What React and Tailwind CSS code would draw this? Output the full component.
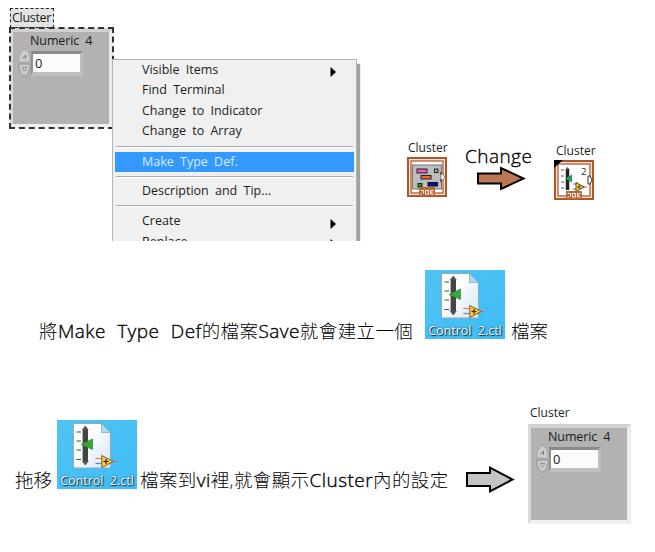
import React from 'react';

function Spinner() {
  return (
    <svg className="-mt-px h-[28px] w-[13px] shrink-0" viewBox="0 0 13 28">
      <path d="M.8 13C.8 6 3.500 1 6.500 1S12.200 6 12.200 13Z" fill="#cdcdcd" stroke="#a2a2a2" strokeWidth=".8" />
      <path d="M.8 15C.8 22 3.500 27 6.500 27S12.200 22 12.200 15Z" fill="#c9c9c9" stroke="#8b8b8b" strokeWidth=".8" />
      <path d="M4.500 9.500 7.500 6v4" fill="none" stroke="#777" />
      <path d="M4.500 18.500h4L6.500 22Z" fill="#eee" stroke="#777" strokeWidth=".8" />
    </svg>
  );
}

function ClusterPanel() {
  return (
    <div className="h-[100px] w-[103px] border-t-4 border-r-4 border-b-4 border-l-[3px] border-t-[#d2d2d2] border-r-[#ececec] border-b-[#f0f0f0] border-l-[#dadada] bg-[#b2b2b2]">
      <div className="ml-[17px] h-[18px] text-[12.5px] leading-[17px] tracking-[-0.1px] whitespace-nowrap [word-spacing:3px]">Numeric 4</div>
      <div className="ml-[5px] flex">
        <Spinner />
        <div className="mt-px h-[25px] w-[52px] border-t-[3px] border-r-[3px] border-b-4 border-l-2 border-t-[#8a8a8a] border-r-[#bfbfbf] border-b-[#c0c0c0] border-l-[#929292] bg-[#fbfbfb] pl-[2px] text-[13px] leading-[18px]">0</div>
      </div>
    </div>
  );
}

function MenuItem({ children, arrow, active }) {
  return (
    <div className={`flex h-[20.4px] shrink-0 items-center pr-[18px] pl-[27px] text-[12.5px] whitespace-nowrap [word-spacing:3px] ${active ? 'bg-[#3399ff] text-[#d9ecff]' : ''}`}>
      <span className="grow leading-none">{children}</span>
      {arrow && (
        <svg className="mt-1 h-[10px] w-[6px]" viewBox="0 0 6 10"><path d="M.5 0 6 5 .5 10Z" fill="#000" /></svg>
      )}
    </div>
  );
}

const Separator = () => <div className="mx-px h-[2px] shrink-0 border-t border-[#a9a9a9] bg-white" />;

function ContextMenu() {
  return (
    <div className="absolute top-[59px] left-[112px] h-[182px] w-[252px] overflow-hidden">
      <div className="flex h-[195px] w-[245px] flex-col border border-[#b4b4b4] bg-[#f0f0f0] px-[2px] shadow-[3px_5px_1px_#a2a2a2]">
        <MenuItem arrow>Visible Items</MenuItem>
        <MenuItem>Find Terminal</MenuItem>
        <MenuItem>Change to Indicator</MenuItem>
        <MenuItem>Change to Array</MenuItem>
        <div className="h-[4px] shrink-0" />
        <Separator />
        <div className="h-[4px] shrink-0" />
        <MenuItem active>Make Type Def.</MenuItem>
        <div className="h-[4px] shrink-0" />
        <Separator />
        <div className="h-[3px] shrink-0" />
        <MenuItem>Description and Tip...</MenuItem>
        <div className="h-[4px] shrink-0" />
        <Separator />
        <div className="h-[4px] shrink-0" />
        <MenuItem arrow>Create</MenuItem>
        <MenuItem arrow>Replace</MenuItem>
      </div>
    </div>
  );
}

function TerminalFrame({ children }) {
  return (
    <svg className="h-[40px] w-[40px]" viewBox="0 0 40 40">
      <rect x="1" y="1" width="38" height="38" fill="#f4e6dc" stroke="#b25427" strokeWidth="2" />
      <rect x="4" y="4" width="32" height="32" fill="#fff" stroke="#c07850" strokeWidth="1.600" />
      {children}
      <rect x="12" y="31" width="16" height="8" fill="#b8673e" />
      <path d="M13.500 33.500h3v3M15 37h-1.500M18.500 37v-3.500h3V37ZM26.500 33.500h-3V37h3M23.500 35.200h2" fill="none" stroke="#fff3e8" strokeWidth="1" />
    </svg>
  );
}

function ClusterTerminal() {
  return (
    <TerminalFrame>
      <rect x="5.500" y="8" width="29" height="24" fill="#bdbdbd" stroke="#777" />
      <rect x="10" y="12" width="10" height="4" fill="#e65cc0" stroke="#222" />
      <rect x="27.500" y="12" width="3.500" height="3.500" fill="#aaa" stroke="#222" />
      <rect x="14" y="18.500" width="10" height="3.500" fill="#ee6430" stroke="#222" />
      <rect x="11" y="26.500" width="4" height="3.500" fill="#179b27" stroke="#222" />
      <rect x="21" y="25.500" width="9.500" height="3.500" fill="#0808b8" stroke="#111" />
      <path d="m34 15 4 5-4 5Z" fill="#fff" stroke="#666" strokeWidth=".8" />
      <path d="M34 15v3M34 22v3" stroke="#222" />
      <rect x="12" y="30" width="16" height="2" fill="#b8673e" />
    </TerminalFrame>
  );
}

function TypeDefTerminal() {
  return (
    <TerminalFrame>
      <path d="M0 0h9L0 8Z" fill="#000" />
      <path d="M13.500 10v20" stroke="#222" strokeWidth="3.500" />
      <path d="m11 10 2.500-3 2.500 3Z" fill="#555" />
      <path d="M7 10h3M7 16h3M7 22h3M7 28h3" stroke="#555" />
      <path d="M11 18.500 18 14.500v8Z" fill="#299b58" />
      <text x="27" y="14.500" fontSize="9.500" fill="#222">2</text>
      <path d="M19 24h5M19 29h5M29 27h4" stroke="#e33a4a" />
      <path d="m22 22.500 8 4.500-8 4.500Z" fill="#ffe51f" stroke="#333" strokeWidth=".9" />
      <path d="M23 27h4M25 25v4" stroke="#222" strokeWidth=".8" />
      <path d="M34 16h2l2 4-2 4h-2Z" fill="#fff" stroke="#333" />
    </TerminalFrame>
  );
}

function Arrow({ brown }) {
  return (
    <svg className="h-[27px] w-[49px]" viewBox="0 0 49 27">
      {brown
        ? <path d="M1 8.500h23V3L46.500 13.500 24 24v-5.500H1Z" fill="#bc7853" stroke="#000" strokeWidth="2" />
        : <path d="M1 7h23V1.700L46.500 13.500 24 25.300V20H1Z" fill="#c4c4c4" stroke="#000" strokeWidth="2" />}
    </svg>
  );
}

function FileIcon() {
  return (
    <div className="flex h-[69px] w-[80px] flex-col items-center overflow-hidden bg-gradient-to-br from-[#51c4f0] to-[#3dbcf9]">
      <svg className="h-[50px] w-[80px] shrink-0" viewBox="0 0 80 50">
        <defs>
          <linearGradient id="paper" x1="0" y1="0" x2="1" y2="1">
            <stop offset=".35" stopColor="#fff" /><stop offset="1" stopColor="#d3e3f4" />
          </linearGradient>
        </defs>
        <path d="M16.500 3.500h28l9 9v35.500h-37Z" fill="url(#paper)" stroke="#90a9bb" />
        <path d="M44.500 3.500v9h9Z" fill="#a9dbf5" stroke="#84a9be" strokeWidth=".8" />
        <path d="M19.500 12h4.500M19.500 21h4.500M19.500 30h4.500M19.500 39.500h4.500" stroke="#444" strokeWidth="1.200" />
        <path d="M28.300 10v31" stroke="#444" strokeWidth="5.400" />
        <path d="m24.800 10 3.500-4.500 3.500 4.500ZM24.800 41l3.500 4.500 3.500-4.500Z" fill="#555" />
        <path d="M24 24.500 35.500 19v10.500Z" fill="#39a638" stroke="#268b31" strokeWidth=".7" />
        <path d="M38.500 38.500h6M56 41.500h5" stroke="#df7370" strokeWidth="1.200" />
        <path d="M38.500 43.500h6" stroke="#5290b8" strokeWidth="1.200" />
        <path d="m44.800 35.500 11.500 6-11.500 6Z" fill="#ffcb3d" stroke="#7c5d20" />
        <path d="M46.500 41.500h5M49 39v5" stroke="#222" strokeWidth="1.200" />
      </svg>
      <span className="mt-[2px] text-[12.5px] leading-[18px] whitespace-nowrap text-[#f5fbfc] [text-shadow:1px_1px_1px_#102c3c,0_0_2px_#235268] [word-spacing:3px]">Control 2.ctl</span>
    </div>
  );
}

function Latin({ children }) {
  return <span className="text-[19px] tracking-[0.45px] [-webkit-text-stroke:0.35px_#000] [word-spacing:6px]">{children}</span>;
}

export default function App() {
  return (
    <main className="relative h-[552px] w-[655px] overflow-hidden bg-white font-['Open_Sans','Noto_Sans_CJK_TC',sans-serif] text-[#1c1c1c]">
      <section className="flex h-[270px] items-start pl-[10px]">
        <div className="w-[397px] pt-[8px]">
          <div className="h-[20px] w-[44px] border border-dashed border-[#222] bg-[#e3e3e3] pl-px text-[12.5px] leading-[18px] tracking-[-0.3px]">Cluster</div>
          <div className="w-[103px] outline-2 -outline-offset-1 outline-dashed outline-[#333]"><ClusterPanel /></div>
        </div>
        <div className="w-[58px] pt-[139px]">
          <div className="h-[18px] pl-px text-[12px] leading-[18px]">Cluster</div>
          <ClusterTerminal />
        </div>
        <div className="w-[89px] pt-[144px]">
          <div className="h-[21px] leading-[24px] font-light text-black"><Latin>Change</Latin></div>
          <div className="pl-[12px]"><Arrow brown /></div>
        </div>
        <div className="pt-[142px]">
          <div className="h-[18px] pl-[2px] text-[12px] leading-[17px]">Cluster</div>
          <TypeDefTerminal />
        </div>
      </section>
      <section className="flex h-[134px] items-start pl-[39px] text-[18.500px] whitespace-nowrap text-black">
        <div className="mt-[49px] w-[386px] leading-[24px] font-light tracking-[0.4px]">將<Latin>Make Type Def</Latin>的檔案<Latin>Save</Latin>就會建立一個</div>
        <FileIcon />
        <div className="mt-[49px] ml-[6px] leading-[24px] font-light">檔案</div>
      </section>
      <section className="flex h-[148px] items-start pl-[15px] text-[18.500px] whitespace-nowrap text-black">
        <div className="mt-[64px] w-[42px] leading-[24px] font-light">拖移</div>
        <div className="mt-[15.500px]"><FileIcon /></div>
        <div className="mt-[64px] ml-[3px] w-[326px] leading-[24px] font-light tracking-[0.4px]">檔案到<Latin>vi</Latin>裡,就會顯示<Latin>Cluster</Latin>內的設定</div>
        <div className="mt-[62px] w-[62px]"><Arrow /></div>
        <div className="text-[#1c1c1c]">
          <div className="h-[20px] pl-[2px] text-[12px] leading-[18px]">Cluster</div>
          <ClusterPanel />
        </div>
      </section>
      <ContextMenu />
    </main>
  );
}
